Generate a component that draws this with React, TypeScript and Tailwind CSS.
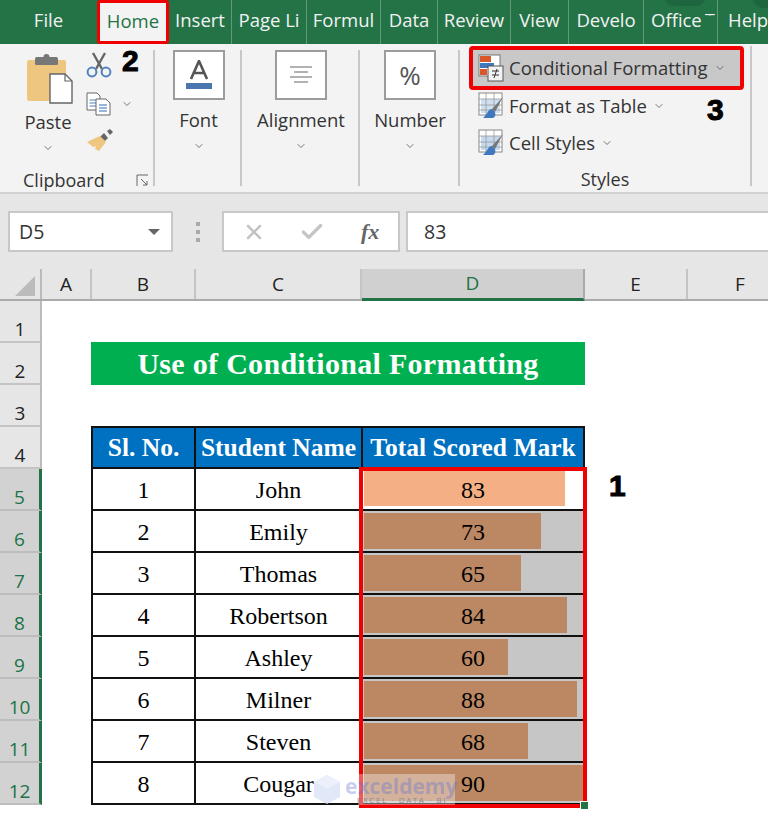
import type { ReactNode } from 'react';
import { X, Check, ChevronDown } from 'lucide-react';

const SANS = 'font-["Open_Sans",sans-serif]';
const MARKER = "font-black text-black font-['Liberation_Sans',sans-serif] [-webkit-text-stroke:1px_black]";

const TABS = [
  { label: 'File', w: 'w-[97px]' },
  { label: 'Home', w: 'w-[72px]', active: true },
  { label: 'Insert', w: 'w-[63px]' },
  { label: 'Page Li', w: 'w-[75px]' },
  { label: 'Formul', w: 'w-[74px]' },
  { label: 'Data', w: 'w-[57px]' },
  { label: 'Review', w: 'w-[73px]' },
  { label: 'View', w: 'w-[58px]' },
  { label: 'Develo', w: 'w-[75px]' },
  { label: 'Office', w: 'w-[74px]', clipped: 'T' },
  { label: 'Help', w: 'w-[50px]', last: true },
];

const STUDENTS = [
  { no: 1, name: 'John', mark: 83, bar: 'w-[201px]' },
  { no: 2, name: 'Emily', mark: 73, bar: 'w-[177px]' },
  { no: 3, name: 'Thomas', mark: 65, bar: 'w-[157px]' },
  { no: 4, name: 'Robertson', mark: 84, bar: 'w-[203px]' },
  { no: 5, name: 'Ashley', mark: 60, bar: 'w-[144px]' },
  { no: 6, name: 'Milner', mark: 88, bar: 'w-[213px]' },
  { no: 7, name: 'Steven', mark: 68, bar: 'w-[164px]' },
  { no: 8, name: 'Cougar', mark: 90, bar: 'w-full' },
];

const COLUMNS = [
  { label: 'A', w: 'w-[50px]' },
  { label: 'B', w: 'w-[104px]' },
  { label: 'C', w: 'w-[166px]' },
  { label: 'D', w: 'w-[223px]', active: true },
  { label: 'E', w: 'w-[103px]' },
  { label: 'F', w: 'w-[106px]' },
];

function Caret({ className = '' }: { className?: string }) {
  return <ChevronDown size={12} strokeWidth={1.6} className={`shrink-0 text-[#555] ${className}`} />;
}

function PasteIcon() {
  return (
    <svg width="48" height="50" viewBox="0 0 48 50">
      <rect x="1" y="6" width="39" height="41" rx="2" fill="#eec680" />
      <rect x="9" y="3" width="23" height="8" rx="1.5" fill="#777" />
      <circle cx="20.500" cy="3" r="3" fill="#777" />
      <path d="M24 20h15l7 7v22H24z" fill="#fff" stroke="#666" strokeWidth="1.400" />
      <path d="M39 20v7h7" fill="none" stroke="#666" strokeWidth="1.200" />
    </svg>
  );
}

function ScissorsIcon() {
  return (
    <svg width="26" height="26" viewBox="0 0 26 26" fill="none">
      <path d="M7 1l9 16M19 1L10 17" stroke="#666" strokeWidth="2.400" />
      <circle cx="6" cy="20" r="4.400" stroke="#4f81bd" strokeWidth="2" />
      <circle cx="20" cy="20" r="4.400" stroke="#4f81bd" strokeWidth="2" />
    </svg>
  );
}

function CopyIcon() {
  return (
    <svg width="26" height="24" viewBox="0 0 26 24" fill="none">
      <path d="M1 1h10l3 3v14H1z" fill="#fff" stroke="#666" />
      <path d="M3.500 8h7M3.500 11h7M3.500 14h7" stroke="#4f81bd" />
      <path d="M10 7h10l4 4v12H10z" fill="#fff" stroke="#666" />
      <path d="M13 13h8M13 16h8M13 19h8" stroke="#2f6fb5" />
    </svg>
  );
}

function BrushIcon() {
  return (
    <svg width="28" height="24" viewBox="0 0 28 24">
      <path d="M18 5l4 5-3 3-5-4z" fill="#666" />
      <path d="M21 3l3-2 3 3-3 3z" fill="#666" />
      <path d="M14 8l6 6-7 9-4-2 1-3-3 1-6-5z" fill="#eec680" />
    </svg>
  );
}

function FontIcon() {
  return (
    <svg width="28" height="30" viewBox="0 0 28 30" fill="none">
      <path d="M6 19L14 1l8 18M9 13h10" stroke="#555" strokeWidth="2.600" />
      <rect x="1" y="23" width="26" height="6" fill="#4a76b0" />
    </svg>
  );
}

function AlignIcon() {
  return (
    <svg width="24" height="18" viewBox="0 0 24 18" fill="none" stroke="#666" strokeWidth="1.200">
      <path d="M1 1h22M5 6h14M1 11h22M5 16h14" />
    </svg>
  );
}

function CondFormatIcon() {
  return (
    <svg width="26" height="28" viewBox="0 0 26 28">
      <rect x="1" y="1" width="21" height="21" fill="#fff" stroke="#777" />
      <rect x="2" y="2" width="11" height="6" fill="#d9572b" />
      <rect x="2" y="9" width="14" height="5" fill="#3f78bf" />
      <rect x="2" y="15" width="7" height="6" fill="#d9572b" />
      <rect x="10" y="12" width="15" height="15" fill="#f2f2f2" stroke="#555" />
      <path d="M14 17h7M14 21h7M19 15l-3 9" stroke="#333" fill="none" />
    </svg>
  );
}

function TableStyleIcon({ fill }: { fill: string }) {
  return (
    <svg width="26" height="28" viewBox="0 0 26 28" fill="none">
      <rect x="1" y="1" width="23" height="22" fill="#fff" stroke="#888" />
      <rect x="3" y="7" width="19" height="14" fill={fill} />
      <path d="M1 7h23M1 13h23M1 18h23M8 1v22M16 1v22" stroke="#9a9a9a" strokeWidth="0.800" />
      <path d="M25 5L14 17l3 3z" fill="#777" />
      <path d="M14 17c-4 0-5 6-9 9h10c3-1 3-5 1-7z" fill="#3f78bf" />
    </svg>
  );
}

function SquareIcon({ children }: { children: ReactNode }) {
  return (
    <div className="w-[52px] h-[50px] flex items-center justify-center bg-white border-2 border-[#9c9c9c]">
      {children}
    </div>
  );
}

function CollapsedGroup({ width, label, children }: { width: string; label: string; children: ReactNode }) {
  return (
    <div className={`${width} my-1.5 pl-[2px] flex flex-col items-center border-r-2 border-[#c8c8c8]`}>
      <SquareIcon>{children}</SquareIcon>
      <span className="mt-2 text-[18.500px] leading-[24px] text-[#333]">{label}</span>
      <Caret className="mt-2" />
    </div>
  );
}

function StyleRow({ icon, label }: { icon: ReactNode; label: string }) {
  return (
    <div className="h-[37px] shrink-0 pl-[18px] flex items-center text-[18.500px] text-[#333]">
      {icon}
      <span className="ml-[5px]">{label}</span>
      <Caret className="ml-1.5" />
    </div>
  );
}

function Ribbon() {
  return (
    <div className={`relative h-[150px] flex bg-[#f3f3f3] border-b-2 border-[#d2d2d2] ${SANS}`}>
      <div className="w-[155px] my-1.5 flex flex-col border-r-2 border-[#c8c8c8]">
        <div className="flex flex-1 pl-[26px] pt-[4px]">
          <div className="w-[60px] flex flex-col items-center pr-3">
            <PasteIcon />
            <span className="-ml-[4px] mt-[6px] text-[18.500px] leading-[24px] text-[#333]">Paste</span>
            <Caret className="mt-2 -ml-[4px]" />
          </div>
          <div className="flex flex-col gap-[12px] -mt-[2px]">
            <ScissorsIcon />
            <div className="flex items-center gap-[9px] pt-[2px]">
              <CopyIcon />
              <Caret />
            </div>
            <BrushIcon />
          </div>
        </div>
        <div className="relative h-[12px] flex items-center pl-[23px] text-[18px] text-[#333]">
          Clipboard
          <svg className="absolute right-[4px] top-[0px]" width="13" height="13" viewBox="0 0 13 13" fill="none" stroke="#666">
            <path d="M1 12V1h11M5 5l6 6M11 7v4H7" />
          </svg>
        </div>
      </div>
      <CollapsedGroup width="w-[87px]" label="Font">
        <FontIcon />
      </CollapsedGroup>
      <CollapsedGroup width="w-[118px]" label="Alignment">
        <AlignIcon />
      </CollapsedGroup>
      <CollapsedGroup width="w-[100px]" label="Number">
        <span className="text-[26px] text-[#555]">%</span>
      </CollapsedGroup>
      <div className="w-[292px] mt-[2px] mb-1.5 flex flex-col border-r-2 border-[#c8c8c8]">
        <div className="ml-[9px] w-[275px] h-[44px] -mb-[3px] shrink-0 flex items-center pl-[5px] bg-[#c8c8c8] border-4 border-[#f00000] rounded-[4px] text-[18.500px] text-[#333]">
          <CondFormatIcon />
          <span className="ml-[5px]">Conditional Formatting</span>
          <Caret className="ml-1.5" />
        </div>
        <StyleRow icon={<TableStyleIcon fill="#cfe0f0" />} label="Format as Table" />
        <StyleRow icon={<TableStyleIcon fill="#c5daee" />} label="Cell Styles" />
        <div className="mt-[6px] h-[16px] shrink-0 text-center text-[18px] leading-[24px] text-[#333]">Styles</div>
      </div>
      <span className={`absolute left-[122px] top-[0px] text-[30px] leading-[34px] ${MARKER}`}>2</span>
      <span className={`absolute left-[707px] top-[49px] text-[30px] leading-[34px] ${MARKER}`}>3</span>
    </div>
  );
}

function FormulaBar() {
  return (
    <div className={`h-[75px] flex items-center bg-[#e6e6e6] pl-2 ${SANS}`}>
      <div className="w-[165px] h-[41px] flex items-center justify-between pl-[9px] pr-[11px] bg-white border-2 border-[#c8c8c8] text-[19.500px] text-[#333]">
        D5
        <span className="w-0 h-0 border-x-[6px] border-x-transparent border-t-[6px] border-t-[#666]" />
      </div>
      <div className="w-[49px] flex flex-col items-center gap-[4px]">
        <span className="w-[4px] h-[4px] bg-[#aaa]" />
        <span className="w-[4px] h-[4px] bg-[#aaa]" />
        <span className="w-[4px] h-[4px] bg-[#aaa]" />
      </div>
      <div className="w-[178px] h-[41px] flex items-center pl-[18px] bg-white border-2 border-[#c8c8c8]">
        <X size={24} strokeWidth={2.500} className="text-[#c4c4c4]" />
        <Check size={26} strokeWidth={3} className="ml-[33px] text-[#c4c4c4]" />
        <span className="ml-[36px] italic font-bold text-[22px] text-[#666] font-['Liberation_Serif',serif]">fx</span>
      </div>
      <div className="ml-[6px] flex-1 h-[41px] flex items-center pl-[16px] bg-white border-y-2 border-l-2 border-[#c8c8c8] text-[19.500px] text-[#333]">
        83
      </div>
    </div>
  );
}

function ColumnHeaders() {
  return (
    <div className={`h-[32px] flex bg-[#e6e6e6] border-b-2 border-[#aaa] text-[19px] text-[#222] ${SANS}`}>
      <div className="w-[42px] shrink-0 flex items-end justify-end pr-[5px] pb-[3px] border-r-2 border-[#bbb]">
        <span className="w-0 h-0 border-l-[20px] border-l-transparent border-b-[20px] border-b-[#bbb]" />
      </div>
      {COLUMNS.map(col => (
        <div
          key={col.label}
          className={`${col.w} shrink-0 flex items-center justify-center ${
            col.active
              ? 'bg-[#d0d0d0] text-[#217346] border-b-[3px] border-[#217346] border-r-2 border-r-[#aaa] -mb-[2px]'
              : 'border-r-2 border-[#c4c4c4]'
          }`}
        >
          {col.label}
        </div>
      ))}
    </div>
  );
}

function RowHeader({ n, active }: { n: number; active?: boolean }) {
  return (
    <div
      className={`w-[42px] h-[42px] flex items-end justify-center border-b-2 text-[19px] leading-[24px] ${SANS} ${
        active
          ? 'bg-[#d2d2d2] border-[#bdbdbd] text-[#217346] border-r-[3px] border-r-[#217346]'
          : 'bg-[#e6e6e6] border-[#c4c4c4] text-[#222] border-r-2 border-r-[#bbb]'
      }`}
    >
      {n}
    </div>
  );
}

function Sheet() {
  const serif = 'font-["Liberation_Serif",serif]';
  const cell = `h-[42px] flex items-center justify-center border-r-2 border-b-2 border-[#111] text-[24px] text-black ${serif}`;
  const head = `h-[43px] pt-[1px] flex items-center justify-center bg-[#0070c0] border-y-2 border-r-2 border-[#111] text-[25.500px] font-bold text-white whitespace-nowrap ${serif}`;

  return (
    <div className="relative flex h-[520px] overflow-hidden bg-white">
      <div className="w-[42px] shrink-0">
        {[1, 2, 3, 4].map(n => (
          <RowHeader key={n} n={n} />
        ))}
        {[5, 6, 7, 8, 9, 10, 11, 12].map(n => (
          <RowHeader key={n} n={n} active />
        ))}
      </div>
      <div className="pl-[49px] pt-[41px]">
        <div className={`w-[494px] h-[43px] flex items-center justify-center bg-[#00b050] text-[30px] font-bold text-white tracking-[0.3px] ${serif}`}>
          Use of Conditional Formatting
        </div>
        <div className="h-[41px]" />
        <div className="grid grid-cols-[103px_167px_222px] w-[494px] border-l-2 border-[#111]">
          <div className={head}>Sl. No.</div>
          <div className={head}>Student Name</div>
          <div className={head}>Total Scored Mark</div>
          {STUDENTS.map((s, i) => (
            <div key={s.no} className="contents">
              <div className={`${cell} pt-[2px]`}>{s.no}</div>
              <div className={`${cell} pt-[2px]`}>{s.name}</div>
              <div className={`${cell} relative ${i === 0 ? 'pt-[1px] pb-[3px] bg-white' : 'py-[2px] bg-[#c6c6c6]'}`}>
                <div className={`${s.bar} h-full mr-auto ml-[1px] ${i === 0 ? 'bg-[#f4b084]' : 'bg-[#bc8864]'}`} />
                <span className="absolute inset-0 pt-[2px] flex items-center justify-center">{s.mark}</span>
              </div>
            </div>
          ))}
        </div>
      </div>

      {/* red selection drawn on top of the sheet */}
      <div className="absolute left-[359px] top-[166px] w-[228px] h-[341px] border-4 border-[#f00000]" />
      <div className="absolute left-[580px] top-[500px] w-[8px] h-[8px] bg-[#217346] border-t border-l border-white" />
      <span className={`absolute left-[609px] top-[168px] text-[30px] leading-[34px] ${MARKER}`}>1</span>

      {/* watermark */}
      <div className="absolute left-[358px] top-[473px] w-[97px] h-[31px] bg-white/35" />
      <svg className="absolute left-[313px] top-[473px]" width="28" height="31" viewBox="0 0 28 31">
        <path d="M14 1l13 7v15l-13 7L1 23V8z" fill="#dce4f7" opacity="0.850" />
        <path d="M14 1l13 7-13 7L1 8z" fill="#eef1fb" opacity="0.900" />
      </svg>
      <div className={`absolute left-[345px] top-[478px] text-[21px] leading-[14px] font-bold text-[#5a6fd8]/35 ${SANS}`}>
        exceldemy
      </div>
      <div className={`absolute left-[357px] top-[494px] text-[8px] leading-[10px] tracking-[1.600px] text-[#8a8a9a] ${SANS}`}>
        EXCEL · DATA · BI
      </div>
    </div>
  );
}

export default function App() {
  return (
    <div className="w-[768px] h-[821px] overflow-hidden bg-white">
      <div className={`relative h-[44px] flex overflow-hidden bg-[#237347] ${SANS}`}>
        {/* faint ribbon backdrop pattern */}
        <span className="absolute left-[664px] -top-[14px] w-[42px] h-[20px] rounded-full bg-[#1d6640]" />
        <span className="absolute left-[752px] -top-[16px] w-[30px] h-[24px] rounded-full bg-[#1d6640]" />
        {TABS.map((tab, i) => (
          <div
            key={tab.label}
            className={`relative ${tab.w} shrink-0 overflow-hidden whitespace-nowrap flex items-center text-[18.500px] ${
              tab.active
                ? 'justify-center bg-[#f3f3f3] text-[#217346] border-[3px] border-[#f00000] rounded-[3px] pb-[2px]'
                : `pb-[5px] text-[#f2f2f2] ${tab.last ? 'justify-start pl-[10px]' : tab.clipped ? 'justify-start pl-[7px]' : 'justify-center'} ${i > 1 && i < 10 ? 'border-r border-[#5f9a79]' : ''}`
            }`}
          >
            {tab.label}
            {tab.clipped && (
              <span className="ml-[3px] [clip-path:inset(0_0_64%_0)]">{tab.clipped}</span>
            )}
          </div>
        ))}
      </div>
      <Ribbon />
      <FormulaBar />
      <ColumnHeaders />
      <Sheet />
    </div>
  );
}
